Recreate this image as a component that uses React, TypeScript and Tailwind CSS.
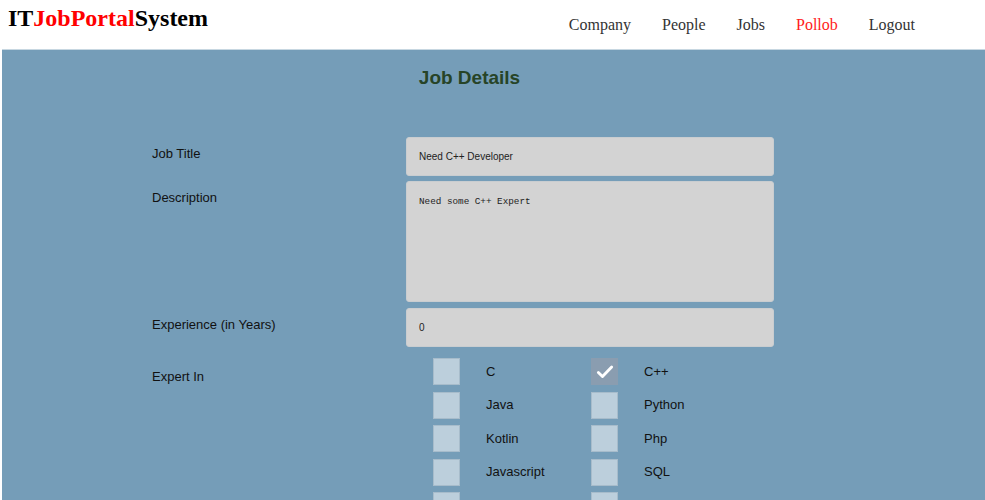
import React from "react";

const navLinks = ["Company", "People", "Jobs", "Pollob", "Logout"];

const skills = [
  { label: "C", checked: false },
  { label: "C++", checked: true },
  { label: "Java", checked: false },
  { label: "Python", checked: false },
  { label: "Kotlin", checked: false },
  { label: "Php", checked: false },
  { label: "Javascript", checked: false },
  { label: "SQL", checked: false },
  { label: "", checked: false },
  { label: "", checked: false },
];

const Field = ({ label, children }: { label: string; children: React.ReactNode }) => (
  <div className="flex">
    <div className="w-[254px] pt-[9px] text-[13px] leading-[16px] text-[#111]">{label}</div>
    {children}
  </div>
);

const SkillBox = ({ label, checked }: { label: string; checked: boolean }) => (
  <div className="flex h-[27px] items-center">
    <div
      className={
        checked
          ? "flex h-[27px] w-[27px] items-center justify-center border border-[#8a9db0] bg-[#8a9db0]"
          : "h-[27px] w-[27px] border border-[#a7bccb] bg-[#bccfdc]"
      }
    >
      {checked && (
        <svg viewBox="0 0 24 24" className="h-[20px] w-[20px]" fill="none" stroke="white" strokeWidth="3.4" strokeLinecap="round" strokeLinejoin="round">
          <path d="M4 12.5l5 5L20 6" />
        </svg>
      )}
    </div>
    <span className="ml-[26px] text-[13px] text-[#111]">{label}</span>
  </div>
);

export default function App() {
  return (
    <div className="h-[500px] w-[985px] overflow-hidden bg-white font-['Liberation_Sans',Arial,sans-serif]">
      <header className="flex h-[49px] items-start justify-between">
        <div className="pl-[8px] pt-[3px] font-['Liberation_Serif',serif] text-[24px] font-bold leading-[30px] text-black">
          IT<span className="text-[#ff0000]">JobPortal</span>System
        </div>
        <nav className="flex gap-[31px] pr-[70px] pt-[15px] font-['Liberation_Serif',serif] text-[16px] leading-[20px]">
          {navLinks.map((l) => (
            <a key={l} href="#" className={l === "Pollob" ? "text-[#ff1a1a]" : "text-[#333]"}>
              {l}
            </a>
          ))}
        </nav>
      </header>

      <main className="ml-[2px] h-[451px] border-t border-[#c7d7e1] bg-[#759db8]">
        <h2 className="w-[935px] pt-[16px] text-center text-[19px] font-bold leading-[24px] text-[#274427]">
          Job Details
        </h2>

        <div className="mt-[47px] flex flex-col gap-[5px] pl-[150px]">
          <Field label="Job Title">
            <div className="flex h-[39px] w-[368px] items-center rounded-[3px] border border-[#c9cdd0] bg-[#d3d3d3] pl-[12px] text-[10px] text-[#222]">
              Need C++ Developer
            </div>
          </Field>
          <Field label="Description">
            <div className="h-[121px] w-[368px] rounded-[3px] border border-[#c9cdd0] bg-[#d3d3d3] pl-[12px] pt-[13px] font-['Liberation_Mono',monospace] text-[9.3px] text-[#222]">
              Need some C++ Expert
            </div>
          </Field>
          <div className="mt-[1px]">
            <Field label="Experience (in Years)">
              <div className="flex h-[39px] w-[368px] items-center rounded-[3px] border border-[#c9cdd0] bg-[#d3d3d3] pl-[12px] text-[10px] text-[#222]">
                0
              </div>
            </Field>
          </div>
          <div className="mt-[6px] flex">
            <div className="w-[254px] pt-[11px] text-[13px] leading-[16px] text-[#111]">Expert In</div>
            <div className="ml-[27px] grid grid-cols-[158px_158px] gap-y-[6.5px]">
              {skills.map((s, i) => (
                <SkillBox key={i} label={s.label} checked={s.checked} />
              ))}
            </div>
          </div>
        </div>
      </main>
    </div>
  );
}
